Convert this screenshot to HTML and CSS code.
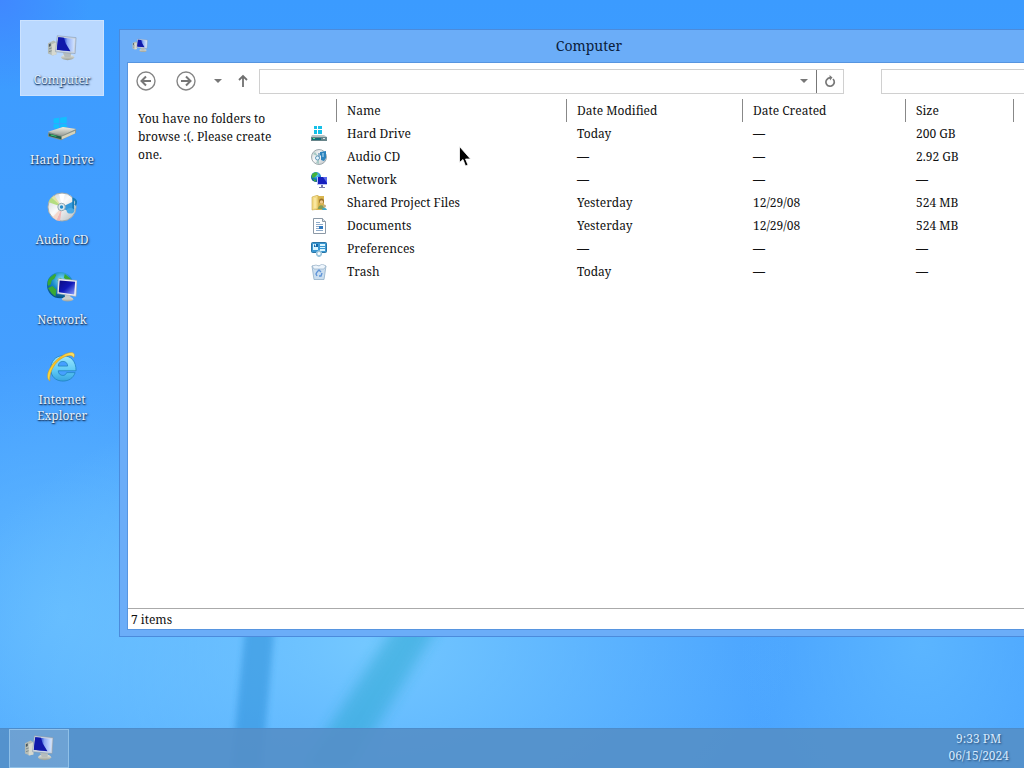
FILE: index.html
```html
<!DOCTYPE html>
<html lang="en">
<head>
<meta charset="utf-8">
<title>Computer</title>
<link rel="stylesheet" href="styles.css">
</head>
<body>
<svg class="defs" width="0" height="0" aria-hidden="true">
  <defs>
    <linearGradient id="screen" x1="0" y1="0" x2="1" y2="0"><stop offset="0" stop-color="#1220b4"/><stop offset=".4" stop-color="#2c4cd0"/><stop offset=".6" stop-color="#8fabf4"/><stop offset="1" stop-color="#d4e6ff"/></linearGradient>
    <linearGradient id="navy" x1="0" y1="0" x2="1" y2="1"><stop offset="0" stop-color="#0b0b80"/><stop offset=".5" stop-color="#1018b8"/><stop offset="1" stop-color="#8da5ff"/></linearGradient>
    <linearGradient id="metal" x1="0" y1="0" x2="0" y2="1"><stop offset="0" stop-color="#f0f0e6"/><stop offset="1" stop-color="#9a9f98"/></linearGradient>
    <linearGradient id="disc" x1="0" y1="0" x2="1" y2="1"><stop offset="0" stop-color="#c6cfd2"/><stop offset=".45" stop-color="#fafafa"/><stop offset="1" stop-color="#b5bcc0"/></linearGradient>
    <radialGradient id="globe" cx=".55" cy=".3" r=".75"><stop offset="0" stop-color="#7fe0ff"/><stop offset=".5" stop-color="#1685c8"/><stop offset="1" stop-color="#064a78"/></radialGradient>
    <linearGradient id="ie" x1="0" y1="0" x2="0" y2="1"><stop offset="0" stop-color="#9ce8ff"/><stop offset=".6" stop-color="#5cc8f5"/><stop offset="1" stop-color="#38a5e0"/></linearGradient>
    <linearGradient id="gold" x1="0" y1="1" x2="1" y2="0"><stop offset="0" stop-color="#ffe24a"/><stop offset=".6" stop-color="#f8b818"/><stop offset="1" stop-color="#ffe870"/></linearGradient>
  </defs>
  <symbol id="i-computer" viewBox="0 0 32 32">
    <path d="M1 12l6-3 3 2v13l-4 1-5-2z" fill="#b4bcb6"/><path d="M5 13l5-2v13l-5 1z" fill="#d6d9d0"/><path d="M2 13l2-1v3l-2 1z" fill="#4b5960"/><path d="M2 18l3-1M2 21l3-1" stroke="#7f8a8a" fill="none"/>
    <ellipse cx="22" cy="27" rx="7" ry="3" fill="url(#metal)"/><path d="M17 22h9l-1 5h-6z" fill="#b5bcbc"/>
    <path d="M11 4l20 2-1 17-21-2z" fill="#cbd5e2" stroke="#8797aa" stroke-width=".6"/>
    <path d="M12 5.500l17.500 2-1 13.500L10.500 19z" fill="url(#screen)"/><path d="M12 5.500l6 .7 2 6 5 8.300L10.500 19z" fill="#1018aa"/>
  </symbol>
  <symbol id="i-drive" viewBox="0 0 32 32">
    <g transform="translate(0 4)"><path d="M7 3l6-1v6H7zM14 2l7-1v7h-7zM7 9h6v5l-6-1zM14 9h7v6l-7-1z" fill="#12bfff"/>
    <path d="M1 18L17 12l14 2v4L15 26 1 22z" fill="#84908a"/><path d="M1 17l16-5 14 2-15 7z" fill="url(#metal)"/>
    <path d="M2 19l13 3v3L2 21.500z" fill="#235f4c"/><path d="M16 22l14-6v3l-14 6z" fill="#d5d2bb"/><path d="M4 20l6 1.500v1L4 21z" fill="#3bd072"/></g>
  </symbol>
  <symbol id="i-cd" viewBox="0 0 32 32">
    <circle cx="16" cy="16" r="15" fill="url(#disc)" stroke="#a0a8a8"/>
    <path d="M16 16L2 11l1-3 3-3z" fill="#b4dd80"/><path d="M16 16L5 6l3-2z" fill="#e2e3a8"/><path d="M16 16L10 30l4 1z" fill="#efb8b8"/><path d="M16 16l-6 14-4-3z" fill="#f5d8cc"/><path d="M16 16L13 2h6z" fill="#fff"/>
    <path d="M18 15l10-5 1 8-3 4-8-4z" fill="#3599dc"/><path d="M28 20V7c3 1 4 4 2 7" fill="none" stroke="#167bb8" stroke-width="2"/><ellipse cx="25" cy="20" rx="4" ry="3" fill="#48a9e5"/>
    <circle cx="15.500" cy="16" r="4" fill="#dceaf0" stroke="#8aa2ae"/><circle cx="15.500" cy="16" r="1.800" fill="#258ac8"/>
  </symbol>
  <symbol id="i-network" viewBox="0 0 32 32">
    <circle cx="14" cy="14" r="14" fill="url(#globe)"/>
    <path d="M3 6l5-4 2 1-2 4-3 2-1 4-3 2c-1-4 0-7 2-9zM1 17l5-2 4 4-1 7-4-3zM19 2l6 5 1 4-5-2-3-3zM11 9l3-3 3 2-2 3z" fill="#39a934"/>
    <ellipse cx="22" cy="29" rx="6" ry="2.500" fill="url(#metal)"/><path d="M19 24h6v5h-6z" fill="#c8cdca"/>
    <path d="M12 7l20 2-1 17-20-3z" fill="#f0f1f4" stroke="#98a0b0" stroke-width=".6"/><path d="M13.500 9l16.500 1.500-1 13.500-16.500-2.500z" fill="url(#navy)"/>
  </symbol>
  <symbol id="i-ie" viewBox="0 0 32 32">
    <path d="M17 4C9 4 4 10 4 18c0 8 5 13 13 13 6 0 11-3 13-9h-9c-1 2-2 3-4 3-3 0-5-2-5-5h19C31 10 26 4 17 4zm-5 11c0-3 2-5 5-5s5 2 5 5z" fill="url(#ie)" stroke="#1d80bd" stroke-width=".8"/>
    <path d="M3 31C-3 27 3 14 12 7 19 1 27-1 29 2c.6 1.500.2 3-.6 4C27 3 23 3 17 6 8 11 2 22 3 31z" fill="url(#gold)" stroke="#c8931c" stroke-width=".5"/>
  </symbol>
  <symbol id="s-drive" viewBox="0 0 16 16"><path d="M3 0h3v3H3zM7 0h4v3H7zM3 4h3v4H3zM7 4h4v4H7z" fill="#16c0e8"/><path d="M1 9h12l3 2v4H0v-4z" fill="#b8c5c6"/><path d="M0 11h16v4H0z" fill="#68858a"/><path d="M1 12h9v2H1z" fill="#176b78"/><path d="M2 12h2v1H2z" fill="#5ceb95"/><path d="M12 12h2v1h-2z" fill="#d9e7e7"/></symbol>
  <symbol id="s-cd" viewBox="0 0 16 16"><circle cx="8" cy="8" r="7.500" fill="url(#disc)" stroke="#9faaaf"/><path d="M8 8L2 5l2-2zM8 8L5 14l3 1z" fill="#a7c9c5"/><path d="M9 3l6-1v7l-2 3-3-1V6L9 7z" fill="#2c83bd"/><path d="M12 4v4" stroke="#bfe5fa"/><path d="M8 4v6" stroke="#286d9f"/><circle cx="6.500" cy="9" r="2" fill="#e4f6ff" stroke="#649abd"/></symbol>
  <symbol id="s-network" viewBox="0 0 16 16"><circle cx="5" cy="5" r="5" fill="url(#globe)"/><path d="M1 2l4-2 2 2-3 3-3 1zM2 7l3 1-1 2z" fill="#45b33a"/><path d="M6 5h10v8H6z" fill="#b7c0f5"/><path d="M7 5h9v7H7z" fill="#1620be"/><path d="M12 5h4v6z" fill="#5c6cea"/><path d="M10 13h2v2h2v1H8v-1h2z" fill="#777caa"/></symbol>
  <symbol id="s-shared" viewBox="0 0 16 16"><path d="M1 2l6-2v14l-6 1z" fill="#f4dc86" stroke="#c7a646" stroke-width=".6"/><path d="M7 1h6v14H4l3-2z" fill="#d9b54f"/><path d="M4 3v10" stroke="#fff0b8"/><circle cx="10.500" cy="6" r="2.500" fill="#98722f"/><circle cx="10.500" cy="7" r="1.700" fill="#efc98a"/><path d="M7 14c0-5 6-5 7 0z" fill="#819d57"/><circle cx="13.500" cy="11" r="1.500" fill="#c5ae80"/><path d="M11 15c0-3 4-3 5 0z" fill="#45a9c9"/></symbol>
  <symbol id="s-doc" viewBox="0 0 16 16"><path d="M2.500.5h9l3 3v12h-12z" fill="#fff" stroke="#8c99a6"/><path d="M11.500.5v3h3" fill="#dce5ee" stroke="#8c99a6"/><path d="M5 4.500h4M5 6.500h7M5 8.500h3M5 10.500h3M5 12.500h7" stroke="#8eabca"/><path d="M8 8h4v3H8z" fill="#2f78c0"/></symbol>
  <symbol id="s-prefs" viewBox="0 0 16 16"><rect x=".5" y="1.500" width="15" height="10" rx="1" fill="#3a97d2" stroke="#2874a5"/><path d="M2 3h5v6H2zM9 3h5v2H9zM9 6h5v1H9zM9 8h5v2H9z" fill="#d9f5ff"/><path d="M3 3l2 3V3h2v3H3z" fill="#1567a8"/><path d="M5 11l3-2 3 2v3l-2 2H7l-2-2z" fill="#9bc5dc"/><circle cx="8" cy="12.500" r="1.500" fill="#fff"/></symbol>
  <symbol id="s-trash" viewBox="0 0 16 16"><path d="M1 2h14l-2 13.500H3z" fill="#cbdeef" stroke="#91aec8" stroke-width=".8"/><path d="M1 2l4-1 3 1 3-2 4 2-2 3H3z" fill="#edf5fc" stroke="#8ba6c0" stroke-width=".6"/><path d="M6 8l2-2 2 2M11 9l-1 3H8M6 12l-1-2 1-2" fill="none" stroke="#5f94d8" stroke-width="1.400"/></symbol>
</svg>

<div class="screen">
  <svg class="wallpaper" viewBox="0 0 1024 768" preserveAspectRatio="none" aria-hidden="true">
    <defs><filter id="soft" x="-30%" y="-10%" width="160%" height="120%"><feGaussianBlur stdDeviation="3"/></filter><filter id="softer" x="-30%" y="-10%" width="160%" height="120%"><feGaussianBlur stdDeviation="7"/></filter></defs>
    <path d="M248 600h29l-15 168h-31z" fill="#2486d0" opacity=".45" filter="url(#soft)"/>
    <path d="M412 600h42L352 768h-50z" fill="#25a5cc" opacity=".48" filter="url(#softer)"/>
  </svg>
  <main class="desktop">
    <nav class="shortcuts" aria-label="Desktop">
      <button class="shortcut shortcut-selected"><svg class="icon-large"><use href="#i-computer"/></svg><span>Computer</span></button>
      <button class="shortcut"><svg class="icon-large"><use href="#i-drive"/></svg><span>Hard Drive</span></button>
      <button class="shortcut"><svg class="icon-large"><use href="#i-cd"/></svg><span>Audio CD</span></button>
      <button class="shortcut"><svg class="icon-large"><use href="#i-network"/></svg><span>Network</span></button>
      <button class="shortcut"><svg class="icon-large"><use href="#i-ie"/></svg><span>Internet Explorer</span></button>
    </nav>

    <section class="window" aria-labelledby="window-title">
      <header class="titlebar"><svg class="icon-small"><use href="#i-computer"/></svg><h1 id="window-title">Computer</h1></header>
      <div class="window-body">
        <div class="toolbar">
          <button class="tool tool-round" aria-label="Back"><svg width="20" height="20" viewBox="0 0 20 20"><circle cx="10" cy="10" r="9" fill="none" stroke="#858585" stroke-width="1.400"/><path d="M15 10H6M10 5.500L5.500 10l4.500 4.500" fill="none" stroke="#777" stroke-width="2"/></svg></button>
          <button class="tool tool-round" aria-label="Forward"><svg width="20" height="20" viewBox="0 0 20 20"><circle cx="10" cy="10" r="9" fill="none" stroke="#858585" stroke-width="1.400"/><path d="M5 10h9M10 5.500l4.500 4.500-4.500 4.500" fill="none" stroke="#777" stroke-width="2"/></svg></button>
          <button class="tool tool-history" aria-label="Recent locations"><svg width="8" height="4"><path d="M0 0h8L4 4z" fill="#777"/></svg></button>
          <button class="tool tool-up" aria-label="Up"><svg width="10" height="14" viewBox="0 0 10 14"><path d="M5 13V2M1 6l4-4 4 4" fill="none" stroke="#707070" stroke-width="1.800"/></svg></button>
          <div class="address">
            <input class="address-input" type="text" aria-label="Address">
            <button class="address-open" aria-label="Show addresses"><svg width="8" height="4"><path d="M0 0h8L4 4z" fill="#777"/></svg></button>
            <button class="refresh" aria-label="Refresh"><svg width="12" height="14" viewBox="0 0 12 14"><path d="M9 5A4.200 4.200 0 1 1 4 4.400l2.500-.8" fill="none" stroke="#777" stroke-width="1.700"/><path d="M5.500 1l3 2.500-2.500 3z" fill="#777"/></svg></button>
          </div>
          <input class="search" type="search" aria-label="Search">
        </div>
        <div class="content">
          <aside class="folders">You have no folders to browse :(. Please create one.</aside>
          <table class="files">
            <colgroup><col class="col-icon"><col class="col-name"><col class="col-modified"><col class="col-created"><col class="col-size"><col></colgroup>
            <thead><tr><td></td><th>Name</th><th>Date Modified</th><th>Date Created</th><th>Size</th><th></th></tr></thead>
            <tbody>
              <tr><td><svg class="icon-small"><use href="#s-drive"/></svg></td><td>Hard Drive</td><td>Today</td><td>—</td><td>200 GB</td><td></td></tr>
              <tr><td><svg class="icon-small"><use href="#s-cd"/></svg></td><td>Audio CD</td><td>—</td><td>—</td><td>2.92 GB</td><td></td></tr>
              <tr><td><svg class="icon-small"><use href="#s-network"/></svg></td><td>Network</td><td>—</td><td>—</td><td>—</td><td></td></tr>
              <tr><td><svg class="icon-small"><use href="#s-shared"/></svg></td><td>Shared Project Files</td><td>Yesterday</td><td>12/29/08</td><td>524 MB</td><td></td></tr>
              <tr><td><svg class="icon-small"><use href="#s-doc"/></svg></td><td>Documents</td><td>Yesterday</td><td>12/29/08</td><td>524 MB</td><td></td></tr>
              <tr><td><svg class="icon-small"><use href="#s-prefs"/></svg></td><td>Preferences</td><td>—</td><td>—</td><td>—</td><td></td></tr>
              <tr><td><svg class="icon-small"><use href="#s-trash"/></svg></td><td>Trash</td><td>Today</td><td>—</td><td>—</td><td></td></tr>
            </tbody>
          </table>
        </div>
        <footer class="status">7 items</footer>
      </div>
    </section>
  </main>
  <footer class="taskbar">
    <button class="task" aria-label="Computer"><svg class="icon-large"><use href="#i-computer"/></svg></button>
    <div class="clock"><time>9:33 PM</time><time>06/15/2024</time></div>
  </footer>
  <svg class="pointer" width="12" height="21" viewBox="0 0 12 21" aria-hidden="true"><path d="M.5.500v16l3.500-3 2.500 6.500 2.500-1-2.500-6h5z" fill="#000" stroke="#fff" stroke-width=".8"/></svg>
</div>
</body>
</html>
```

FILE: styles.css
```css
* { box-sizing: border-box; }

body {
  margin: 0;
  font-family: "Noto Serif", "Droid Serif", "Liberation Serif", serif;
  font-size: 12px;
  line-height: 18px;
  color: #111;
}

button, input { font: inherit; color: inherit; border: 0; padding: 0; background: none; }
svg { display: block; }
.defs { position: absolute; }
.icon-large { width: 30px; height: 30px; flex: none; }
.icon-small { width: 16px; height: 16px; flex: none; }

.screen {
  position: relative;
  display: flex;
  flex-direction: column;
  height: 100vh;
  overflow: hidden;
  background:
    radial-gradient(ellipse 420px 260px at 36% 84%, #74c8ff, rgba(112, 197, 255, 0)),
    radial-gradient(ellipse 260px 260px at 6% 80%, #62baff, rgba(98, 186, 255, 0)),
    radial-gradient(ellipse 180px 220px at 90% 84%, #5bb5ff, rgba(91, 181, 255, 0)),
    radial-gradient(circle 90px at 0 0, #4088ff, rgba(64, 136, 255, 0)),
    linear-gradient(#3b9bff, #459fff 50%, #4ba5ff);
}
.wallpaper { position: absolute; inset: 0; width: 100%; height: 100%; }

.desktop { position: relative; flex: 1; min-height: 0; }

.shortcuts { display: flex; flex-direction: column; gap: 4px; width: 84px; margin: 20px; }
.shortcut {
  display: flex;
  flex-direction: column;
  align-items: center;
  gap: 10px;
  min-height: 76px;
  padding: 12px 8px 8px;
  line-height: 16px;
  color: #e4f2ff;
  text-shadow: 1px 1px 2px #153865, 0 1px 1px #2b4f7c;
}
.shortcut-selected { background: #b9d8ff; border: 1px solid #cbe2ff; padding: 11px 7px 7px; }

.window {
  position: absolute;
  top: 29px;
  left: 119px;
  width: calc(100% - 84px);
  bottom: 91px;
  display: flex;
  flex-direction: column;
  padding: 0 8px 7px;
  background: #6badf8;
  border: 1px solid #4b8bdc;
}
.titlebar { display: flex; align-items: center; height: 33px; padding: 0 20px 4px 4px; }
.titlebar h1 { flex: 1; margin: 0; padding-top: 2px; text-align: center; font-size: 14px; font-weight: 400; color: #0a203c; }
.window-body { flex: 1; min-height: 0; display: flex; flex-direction: column; background: #fff; outline: 1px solid #5795e0; }

.toolbar { display: flex; align-items: center; height: 36px; padding: 0 9px 0 1px; }
.tool { display: flex; align-items: center; justify-content: center; height: 24px; }
.tool-round { width: 20px; margin-left: 7px; margin-right: 13px; }
.tool-history { width: 18px; }
.tool-up { width: 32px; }
.address { flex: 1; display: flex; height: 25px; border: 1px solid #d0d0d0; }
.address-input { flex: 1; min-width: 0; }
.address-open { display: flex; align-items: center; justify-content: center; width: 24px; }
.refresh { display: flex; align-items: center; justify-content: center; width: 27px; border-left: 1px solid #777; }
.search { width: 160px; height: 25px; margin-left: 37px; border: 1px solid #d0d0d0; }

.content { flex: 1; min-height: 0; display: flex; }
.folders { width: 174px; padding: 11px 20px 10px 10px; flex: none; }
.files { flex: 1; align-self: flex-start; table-layout: fixed; width: 100%; border-collapse: separate; border-spacing: 0; }
.files th, .files td { height: 23px; padding: 0 0 0 11px; text-align: left; font-weight: 400; white-space: nowrap; }
.files th { border-left: 1px solid #888; padding-left: 10px; }
.files td:first-child { padding-left: 9px; }
.col-icon { width: 34px; }
.col-name { width: 230px; }
.col-modified { width: 176px; }
.col-created { width: 163px; }
.col-size { width: 108px; }
.status { height: 21px; padding: 2px 3px 0; border-top: 1px solid #aaa; }

.taskbar {
  position: relative;
  display: flex;
  align-items: stretch;
  justify-content: space-between;
  height: 40px;
  padding: 0 15px 0 9px;
  background: rgba(84, 143, 200, .9);
  border-top: 1px solid #4d8cca;
}
.task { display: flex; align-items: center; justify-content: center; width: 60px; padding-bottom: 4px; background: rgba(255, 255, 255, .14); border: 1px solid #8fc0e8; }
.clock { display: flex; flex-direction: column; align-items: center; padding-top: 1px; line-height: 17px; color: #d5eaff; text-shadow: 1px 1px 2px #264d7a; }

.pointer { position: absolute; left: 459px; top: 146px; }
```
